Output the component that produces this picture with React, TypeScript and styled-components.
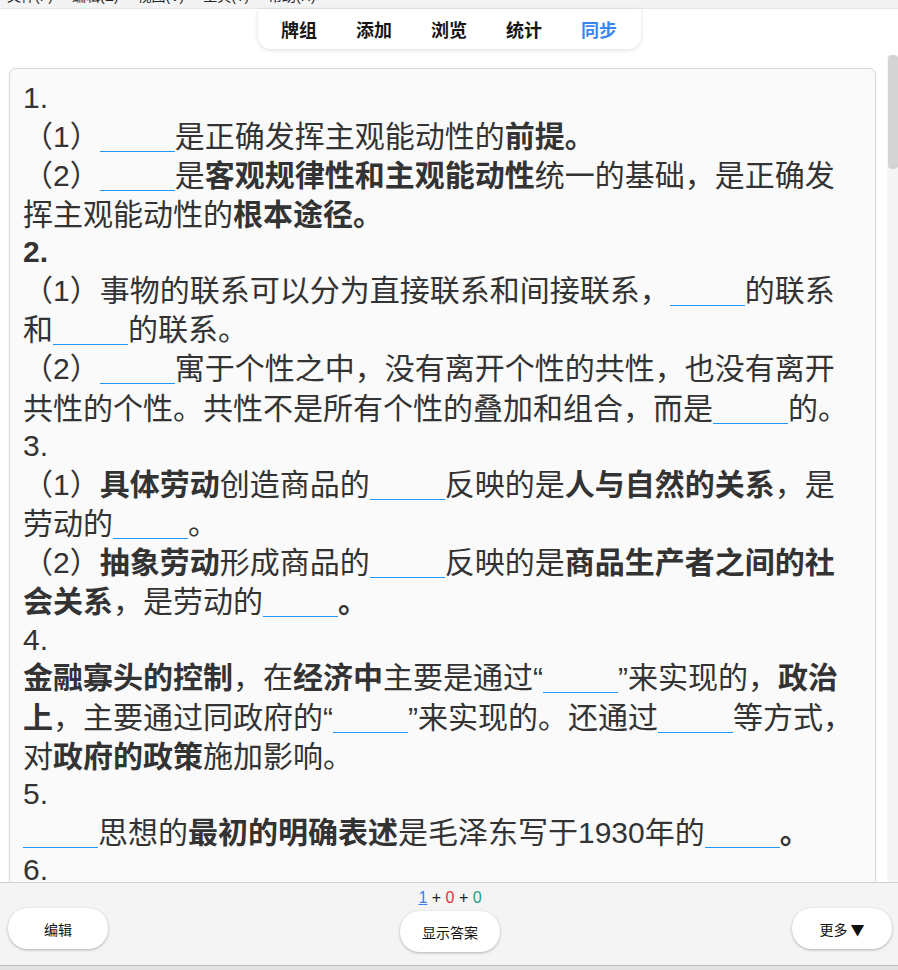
import {FC, ReactNode} from 'react';
import styled, {createGlobalStyle} from 'styled-components';

const menus = ['文件(F)', '编辑(E)', '视图(V)', '工具(T)', '帮助(H)'];
const tabs = ['牌组', '添加', '浏览', '统计', '同步'];

const App:FC = () => <>
    <Global/>
    <Window>
        <MenuBar>
            {menus.map(m => <MenuItem key={m}>{m}</MenuItem>)}
        </MenuBar>

        <Toolbar>
            <TabPill>
                {tabs.map(t => <Tab key={t} $active={t === '同步'}>{t}</Tab>)}
            </TabPill>
        </Toolbar>

        <Main>
            <Reviewer>
                <Card>
                    <Num>1.</Num>
                    <Line>（1）<Blank/>是正确发挥主观能动性的<B>前提。</B></Line>
                    <Line>（2）<Blank/>是<B>客观规律性和主观能动性</B>统一的基础，是正确发挥主观能动性的<B>根本途径。</B></Line>

                    <Num $bold>2.</Num>
                    <Line>（1）事物的联系可以分为直接联系和间接联系，<Blank/>的联系和<Blank/>的联系。</Line>
                    <Line>（2）<Blank/>寓于个性之中，没有离开个性的共性，也没有离开共性的个性。共性不是所有个性的叠加和组合，而是<Blank/>的。</Line>

                    <Num>3.</Num>
                    <Line>（1）<B>具体劳动</B>创造商品的<Blank/>反映的是<B>人与自然的关系</B>，是劳动的<Blank/>。</Line>
                    <Line>（2）<B>抽象劳动</B>形成商品的<Blank/>反映的是<B>商品生产者之间的社会关系</B>，是劳动的<Blank/><B>。</B></Line>

                    <Num>4.</Num>
                    <Line><B>金融寡头的控制</B>，在<B>经济中</B>主要是通过“<Blank/>”来实现的，<B>政治上</B>，主要通过同政府的“<Blank/>”来实现的。还通过<Blank/>等方式，对<B>政府的政策</B>施加影响。</Line>

                    <Num>5.</Num>
                    <Line><Blank/>思想的<B>最初的明确表述</B>是毛泽东写于1930年的<Blank/><B>。</B></Line>

                    <Num>6.</Num>
                    <Line>（1）<Blank/>是马克思主义中国化的第一次历史性飞跃。</Line>
                </Card>
            </Reviewer>
            <ScrollTrack>
                <ScrollThumb/>
            </ScrollTrack>
        </Main>

        <BottomBar>
            <BarSide>
                <BarButton>编辑</BarButton>
            </BarSide>
            <BarCenter>
                <Counts>
                    <Count $color="#3b7ff0" $underline>1</Count> + <Count $color="#e5322d">0</Count> + <Count $color="#16a085">0</Count>
                </Counts>
                <BarButton>显示答案</BarButton>
            </BarCenter>
            <BarSide $right>
                <BarButton>更多 ▼</BarButton>
            </BarSide>
        </BottomBar>
        <BottomEdge/>
    </Window>
</>

const Blank:FC = () => <BlankLine/>;

const B:FC<{children: ReactNode}> = ({children}) => <Strong>{children}</Strong>;

const Global = createGlobalStyle`
    html, body {
        margin: 0;
        padding: 0;
        height: 100%;
        overflow: hidden;
        background: #ffffff;
    }
    #root {
        height: 100%;
    }
`;

const Window = styled.div`
    height: 970px;
    display: flex;
    flex-direction: column;
    font-family: "Liberation Sans", "Noto Sans CJK SC", sans-serif;
    color: #111;
`;

const MenuBar = styled.div`
    height: 8px;
    flex: none;
    overflow: hidden;
    display: flex;
    padding-left: 7px;
    background: #f3f3f3;
    border-bottom: 1px solid #e6e6e6;
`;

const MenuItem = styled.span`
    font-size: 14px;
    line-height: 20px;
    margin-top: -14px;
    margin-right: 19px;
    color: #222;
    white-space: nowrap;
`;

const Toolbar = styled.div`
    height: 46px;
    flex: none;
    display: flex;
    justify-content: center;
    align-items: flex-start;
    background: #ffffff;
`;

const TabPill = styled.nav`
    display: flex;
    padding: 0 4px;
    height: 40px;
    align-items: center;
    background: #ffffff;
    border-radius: 0 0 13px 13px;
    box-shadow: 0 1px 4px rgba(0, 0, 0, 0.14);
`;

const Tab = styled.span<{$active?: boolean}>`
    padding: 0 19.5px;
    font-family: "Noto Sans CJK SC", sans-serif;
    font-size: 18px;
    font-weight: 700;
    color: ${p => p.$active ? '#3a86f0' : '#161616'};
`;

const Main = styled.div`
    flex: 1;
    min-height: 0;
    display: flex;
`;

const Reviewer = styled.div`
    flex: 1;
    overflow: hidden;
    padding: 13px 11px 0 9px;
    background: #ffffff;
`;

const Card = styled.div`
    background: #fafafa;
    border: 1px solid #d9d9d9;
    border-radius: 7px;
    box-shadow: 0 0 2px rgba(0, 0, 0, 0.08);
    padding: 11px 13px 20px 13px;
    color: #333;
    font-size: 30px;
`;

const Num = styled.div<{$bold?: boolean}>`
    line-height: 36.5px;
    font-weight: ${p => p.$bold ? 700 : 400};
`;

const Line = styled.div`
    line-height: 39.3px;
`;

const Strong = styled.strong`
    font-weight: 700;
`;

const BlankLine = styled.span`
    display: inline-block;
    width: 75px;
    border-bottom: 1px solid #2196f3;
    vertical-align: -5px;
`;

const ScrollTrack = styled.div`
    width: 10px;
    flex: none;
    background: #f5f5f5;
    padding-left: 1px;
`;

const ScrollThumb = styled.div`
    height: 114px;
    background: #d4d4d4;
    border-radius: 4px;
`;

const BottomBar = styled.div`
    height: 82px;
    flex: none;
    display: grid;
    grid-template-columns: 1fr auto 1fr;
    background: #f4f4f4;
    border-top: 1px solid #cfcfcf;
    border-bottom: 1px solid #b9b9b9;
    padding: 0 6px 0 8px;
`;

const BarSide = styled.div<{$right?: boolean}>`
    display: flex;
    align-items: flex-start;
    justify-content: ${p => p.$right ? 'flex-end' : 'flex-start'};
    padding-top: 25px;
`;

const BarCenter = styled.div`
    display: flex;
    flex-direction: column;
    align-items: center;
    padding-top: 5px;
`;

const Counts = styled.div`
    font-size: 16px;
    line-height: 20px;
    margin-bottom: 3px;
    color: #222;
`;

const Count = styled.span<{$color: string; $underline?: boolean}>`
    color: ${p => p.$color};
    text-decoration: ${p => p.$underline ? 'underline' : 'none'};
`;

const BarButton = styled.button`
    width: 100px;
    height: 41px;
    border: none;
    border-radius: 20px;
    background: #ffffff;
    box-shadow: 0 1px 3px rgba(0, 0, 0, 0.28);
    font-family: "Noto Sans CJK SC", sans-serif;
    font-size: 14px;
    color: #111;
    padding: 0;
`;

const BottomEdge = styled.div`
    height: 4px;
    flex: none;
    background: #e2e2e2;
`;

export default App;
